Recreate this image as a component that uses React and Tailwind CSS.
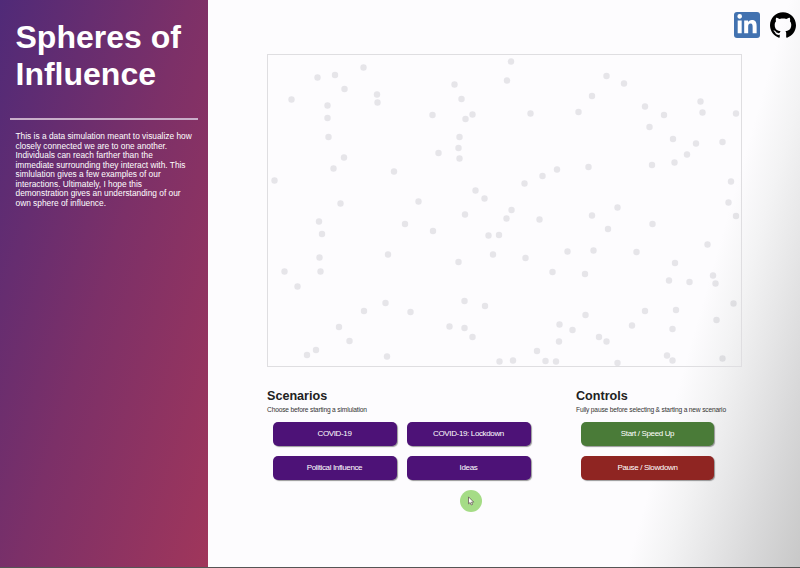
import { FaLinkedinIn } from "react-icons/fa";
import { SiGithub } from "react-icons/si";

// Centre of each person in the simulation field, in field pixels.
const people = [
  [96, 13], [50, 23], [67.5, 20.5], [77, 34.5], [24, 45], [109.5, 40], [110, 48], [60, 51],
  [60, 63.5], [61, 82.5], [76.5, 103], [66, 114], [126.5, 117], [7, 126], [73, 149], [151, 147],
  [187, 30], [194, 44.5], [205, 60], [198, 64.5], [165, 60.5], [192, 82.5], [191, 93.5], [192, 104],
  [171, 98.5], [208, 136], [217, 144], [243.5, 7], [239.5, 26], [339, 21.5], [356.5, 29], [324.5, 41.5],
  [311, 57.5], [263, 59], [377.5, 52], [396.5, 60.5], [433, 47], [435, 58], [468.5, 59], [382, 72.5],
  [405.5, 84.5], [428.5, 89], [455, 87.5], [419.5, 100], [384.5, 110.5], [407, 108], [321, 112.5],
  [289.5, 115], [275, 121.5], [257, 129], [463.5, 127], [461, 148], [350, 153], [244, 155.5],
  [51.5, 167], [54.5, 179.5], [52, 203], [53, 217], [17, 217], [30, 232], [120.5, 200], [137.5, 169.5],
  [165.5, 176.5], [197.5, 160], [221, 181], [231.5, 180.5], [225.5, 200], [191, 207.5], [197, 246.5],
  [217.5, 251.5], [118, 248.5], [96.5, 256.5], [143, 257.5], [71.5, 272.5], [82, 286.5], [48.5, 295.5],
  [39.5, 300.5], [119.5, 302], [182, 272], [197, 273.5], [205, 282.5], [232, 307], [239, 164],
  [272, 165], [324.5, 161], [340.5, 174.5], [385, 169.5], [468.5, 161.5], [440, 190], [300, 197],
  [326, 196], [369, 197.5], [258, 203.5], [285, 217.5], [317.5, 219.5], [407.5, 208.5], [445.5, 221],
  [448, 229], [401.5, 226], [422, 227.5], [466, 249], [449, 265.5], [377.5, 256.5], [408.5, 255.5],
  [318, 260.5], [364.5, 271], [292, 270], [305, 275.5], [405, 274.5], [331.5, 282.5], [339, 287],
  [291.5, 287], [269.5, 296.5], [245.5, 306], [278, 306.5], [288.5, 307], [350, 308.5], [399.5, 301],
  [405, 306], [455, 304],
];

function ActionButton({ color, children }) {
  return (
    <button
      className={`h-6 w-full rounded-[5px] pb-px text-[8px] leading-none tracking-[-0.36px] text-white shadow-[1px_1px_1px_#666666aa] ${color}`}
    >
      {children}
    </button>
  );
}

function Panel({ title, hint, children, className }) {
  return (
    <section className={className}>
      <h2 className="text-[12.6px] leading-[15px] font-bold text-[#222]">{title}</h2>
      <p className="mt-px text-[6.65px] leading-[10px] tracking-[-0.17px] whitespace-nowrap text-[#333]">
        {hint}
      </p>
      {children}
    </section>
  );
}

export default function App() {
  return (
    <div className="flex h-[568px] w-[800px] overflow-hidden border-b border-[#555] font-['Liberation_Sans',Arial,sans-serif]">
      <aside className="w-[208px] shrink-0 bg-[linear-gradient(107deg,#502a78_0%,#7c3068_50%,#a0365b_100%)] pt-[19px]">
        <h1 className="pl-[15.5px] text-[32px] leading-[37px] font-bold text-white">
          Spheres of
          <br />
          Influence
        </h1>
        <div className="mx-[10px] mt-[25px] h-[1.5px] bg-[#c9aec9]" />
        <p className="mt-[12.5px] pl-[15.5px] text-[8.36px] leading-[9.57px] whitespace-nowrap text-white">
          This is a data simulation meant to visualize how
          <br />
          closely connected we are to one another.
          <br />
          Individuals can reach farther than the
          <br />
          immediate surrounding they interact with. This
          <br />
          simlulation gives a few examples of our
          <br />
          interactions. Ultimately, I hope this
          <br />
          demonstration gives an understanding of our
          <br />
          own sphere of influence.
        </p>
      </aside>

      <main className="relative flex-1 bg-[linear-gradient(106deg,#fdfcfe_77%,#f3f3f4_82%,#e7e7e8_87%,#d8d8d9_93%,#c8c8c8_100%)]">
        <nav className="flex h-[54px] justify-end gap-[10px] pt-[12px] pr-[4px]">
          <div className="flex size-[26px] items-center justify-center rounded-[3px] bg-[#4272b0]">
            <FaLinkedinIn className="size-[22px] text-white" />
          </div>
          <SiGithub className="size-[26px] text-black" />
        </nav>

        <div className="ml-[59px] h-[313px] w-[475px] border border-[#dfdee1]">
          <svg width="473" height="311" className="block fill-[#000018]/9">
            {people.map(([x, y]) => (
              <circle key={`${x}-${y}`} cx={x - 0.5} cy={y - 0.5} r="3.2" />
            ))}
          </svg>
        </div>

        <div className="flex pt-[22px] pl-[59px]">
          <Panel
            title="Scenarios"
            hint="Choose before starting a simlulation"
            className="w-[309px]"
          >
            <div className="mt-[7px] ml-[5.5px] grid w-[258px] grid-cols-2 gap-[10px]">
              <ActionButton color="bg-[#4d1277]">COVID-19</ActionButton>
              <ActionButton color="bg-[#4d1277]">COVID-19: Lockdown</ActionButton>
              <ActionButton color="bg-[#4d1277]">Political Influence</ActionButton>
              <ActionButton color="bg-[#4d1277]">Ideas</ActionButton>
            </div>
          </Panel>
          <Panel
            title="Controls"
            hint="Fully pause before selecting & starting a new scenario"
          >
            <div className="mt-[7px] ml-[5px] grid w-[133px] gap-[10px]">
              <ActionButton color="bg-[#4a7b38]">Start / Speed Up</ActionButton>
              <ActionButton color="bg-[#8f2522]">Pause / Slowdown</ActionButton>
            </div>
          </Panel>
        </div>

        {/* Highlighted mouse pointer */}
        <div className="absolute top-[490px] left-[252px] flex size-[22px] items-center justify-center rounded-full bg-[#a5dc86]">
          <svg width="8" height="10" viewBox="0 0 6 8" className="-ml-px">
            <path
              d="M1 .7v5.6l1.3-1.1.9 2 1-.4-.8-1.9h1.8z"
              fill="#fff"
              stroke="#655"
              strokeWidth=".6"
            />
          </svg>
        </div>
      </main>
    </div>
  );
}
